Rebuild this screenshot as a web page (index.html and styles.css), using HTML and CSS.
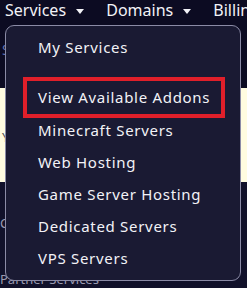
FILE: index.html
```html
<html>

<head>
    <title>Client Area</title>
    <link rel="stylesheet" href="styles.css">
</head>

<body>
	<div class='nav'>
		<span class='nav-item'>Services <span class='caret'></span></span>
		<span class='nav-item'>Domains <span class='caret'></span></span>
		<span class='nav-item'>Billing <span class='caret'></span></span>
	</div>

	<div class='page'>
		<div class='search'>Search our knowledgebase</div>
		<div class='notice'>Your account has an overdue invoice</div>
		<div class='panel'>
			<div class='panel-row'>Contact</div>
			<div class='panel-row'>Partner Services</div>
		</div>
	</div>

	<div class='dropdown'>
		<div class='dd-item'>My Services</div>
		<div class='dd-item highlight'>View Available Addons</div>
		<div class='dd-item after'>Minecraft Servers</div>
		<div class='dd-item'>Web Hosting</div>
		<div class='dd-item'>Game Server Hosting</div>
		<div class='dd-item'>Dedicated Servers</div>
		<div class='dd-item'>VPS Servers</div>
	</div>
</body>

</html>
```

FILE: styles.css
```css
html, body {
	margin: 0;
	height: 288px;
	overflow: hidden;
}

body {
	font-family: "Noto Sans", sans-serif;
	background-color: #0c0b22;
	color: #f2f2f7;
	position: relative;
}

.nav {
	display: flex;
	gap: 22px;
	padding: 0 0 0 5px;
	height: 22px;
	font-size: 16px;
	line-height: 21px;
	white-space: nowrap;
	overflow: hidden;
}

.caret {
	display: inline-block;
	margin-left: 6px;
	vertical-align: middle;
	border-left: 4px solid transparent;
	border-right: 4px solid transparent;
	border-top: 5px solid #f2f2f7;
}

.page {
	padding-top: 18px;
	height: 248px;
	overflow: hidden;
}

.search {
	height: 48px;
	color: #5d6fb0;
	font-size: 14px;
	padding-left: 2px;
}

.notice {
	height: 94px;
	background-color: #fffce0;
	color: #555;
	font-size: 13px;
	padding: 40px 0 0 2px;
	box-sizing: border-box;
}

.panel {
	background-color: #11112a;
	color: #9a9ab0;
	font-size: 13px;
	padding-top: 32px;
}

.panel-row {
	height: 56px;
}

.dropdown {
	position: absolute;
	left: 5px;
	top: 25px;
	width: 236px;
	height: 256px;
	background-color: #1a1a33;
	border: 1px solid #8b8ba6;
	border-radius: 9px;
	padding-top: 5px;
	box-sizing: border-box;
}

.dd-item {
	font-size: 15px;
	letter-spacing: 0.7px;
	height: 32px;
	line-height: 32px;
	padding-left: 32px;
	white-space: nowrap;
}

.dd-item.highlight {
	margin: 14px 15px 0 17px;
	padding-left: 11px;
	height: 33px;
	line-height: 33px;
	border: 4px solid #e01f2a;
}

.dd-item.after {
	margin-top: -4px;
}
```
